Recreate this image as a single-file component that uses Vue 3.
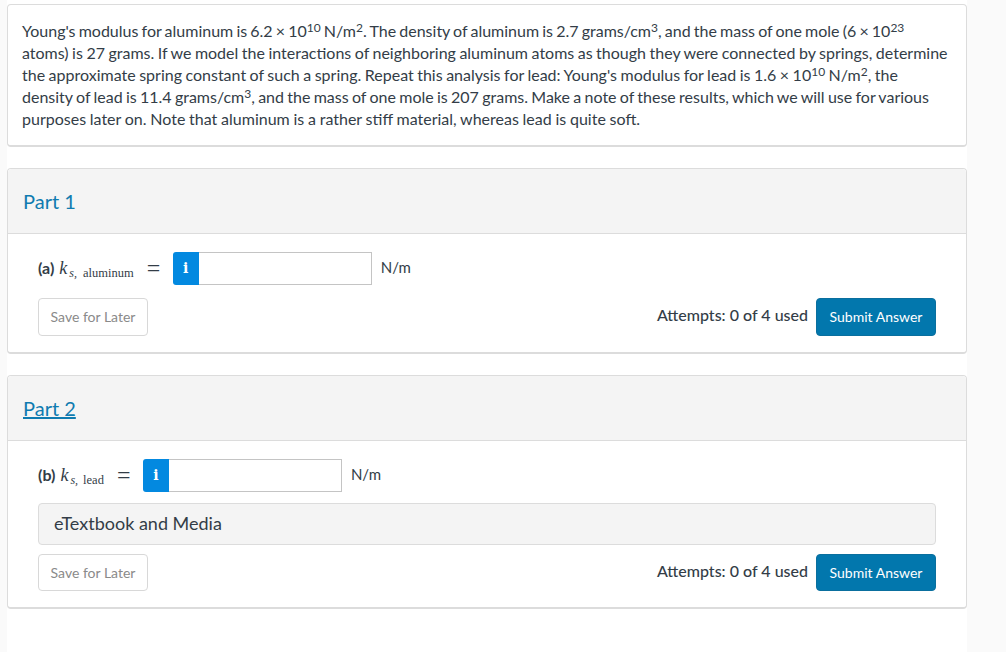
<template>
  <main class="page">
    <div class="column">
      <section class="card question">
        <p>
          <span class="line first">Young's modulus for aluminum is 6.2 × 10<sup>10</sup> N/m<sup>2</sup>. The density of aluminum is 2.7 grams/cm<sup>3</sup>, and the mass of one mole (6 × 10<sup>23</sup></span>
          <span class="line">atoms) is 27 grams. If we model the interactions of neighboring aluminum atoms as though they were connected by springs, determine</span>
          <span class="line">the approximate spring constant of such a spring. Repeat this analysis for lead: Young's modulus for lead is 1.6 × 10<sup>10</sup> N/m<sup>2</sup>, the</span>
          <span class="line fourth">density of lead is 11.4 grams/cm<sup>3</sup>, and the mass of one mole is 207 grams. Make a note of these results, which we will use for various</span>
          <span class="line last">purposes later on. Note that aluminum is a rather stiff material, whereas lead is quite soft.</span>
        </p>
      </section>

      <section v-for="part in parts" :key="part.title" class="card part">
        <header class="part-head">
          <a class="part-title" :class="{ active: part.active }">{{ part.title }}</a>
        </header>
        <div class="part-body" :class="{ tight: part.media }">
          <div class="answer-row">
            <strong class="letter">({{ part.letter }})</strong>
            <span class="formula">
              <i class="k">k</i><i class="s">s,</i><span class="sub">{{ part.sub }}</span>
            </span>
            <span class="eq">=</span>
            <span class="field">
              <span class="info">i</span>
              <input class="input" type="text" />
            </span>
            <span class="unit">N/m</span>
          </div>
          <div v-if="part.media" class="media">eTextbook and Media</div>
          <div class="actions">
            <button class="btn-save">Save for Later</button>
            <span class="attempts">Attempts: 0 of 4 used</span>
            <button class="btn-submit">Submit Answer</button>
          </div>
        </div>
      </section>
    </div>
  </main>
</template>

<script setup>
const parts = [
  { title: 'Part 1', letter: 'a', sub: 'aluminum', active: false, media: false },
  { title: 'Part 2', letter: 'b', sub: 'lead', active: true, media: true }
];
</script>

<style scoped>
.page {
  min-height: 652px;
  background: #fafafa;
  font-family: Lato, "Open Sans", sans-serif;
  color: #333d47;
  overflow: hidden;
}
.column {
  width: 960px;
  height: 652px;
  margin-left: 7px;
  padding-top: 4px;
  box-sizing: border-box;
  background: #fff;
  display: flex;
  flex-direction: column;
  gap: 21px;
}
.card {
  background: #fff;
  border: 1px solid #dcdcdc;
  border-bottom-width: 2px;
  border-radius: 4px;
  box-sizing: border-box;
}
.question { height: 143px; padding: 15px 14px; }
.question p {
  margin: 0;
  font-size: 16px;
  line-height: 22px;
  word-spacing: -0.6px;
  white-space: nowrap;
}
.line { display: block; }
.line.first { word-spacing: -0.95px; }
.line.fourth { word-spacing: -0.8px; }
.line.last { word-spacing: -0.35px; }
sup { font-size: 12px; line-height: 0; vertical-align: 5px; }
.part-head {
  height: 65px;
  background: #f4f4f4;
  border-bottom: 1px solid #dcdcdc;
  display: flex;
  align-items: center;
  padding-left: 15px;
  border-radius: 4px 4px 0 0;
  box-sizing: border-box;
}
.part-title { font-size: 20px; color: #0f7bb0; }
.part-title.active { text-decoration: underline; }
.part-body { padding: 17px 30px 16px; }
.answer-row { display: flex; align-items: center; height: 34px; font-size: 15px; }
.letter { font-weight: 700; margin: 0 5px 2px 0; font-size: 16px; }
.formula { font-family: "Liberation Serif", serif; display: flex; align-items: baseline; }
.k { font-size: 18px; }
.s { font-size: 12px; margin: 0 6px 0 2px; position: relative; top: 3px; }
.tight .s { margin-right: 5px; }
.sub { font-size: 12.5px; position: relative; top: 3px; }
.eq { margin: 0 14px 0 13px; width: 12px; font-size: 24px; line-height: 1; font-family: "Liberation Serif", serif; }
.field { display: flex; height: 33px; }
.info {
  width: 26px;
  background: #0389e0;
  color: #fff;
  font: 700 14px "DejaVu Serif", serif;
  display: flex;
  align-items: center;
  justify-content: center;
  border-radius: 3px 0 0 3px;
}
.input {
  width: 173px;
  height: 33px;
  box-sizing: border-box;
  border: 1px solid #c4c4c4;
  border-left: 0;
  outline: none;
  background: #fff;
  padding: 0;
}
.unit { margin: 0 0 2px 9px; font-size: 15px; }
.media {
  margin-top: 11px;
  height: 42px;
  line-height: 38px;
  padding-left: 15px;
  background: #f4f4f4;
  border: 1px solid #dcdcdc;
  border-radius: 4px;
  box-sizing: border-box;
  font-size: 18px;
}
.actions { display: flex; align-items: center; margin-top: 13px; }
.tight .actions { margin-top: 9px; }
.btn-save,
.btn-submit {
  height: 38px;
  border-radius: 4px;
  font: 14px Lato, sans-serif;
  padding: 0 0 2px;
}
.tight .btn-save,
.tight .btn-submit { height: 37px; padding: 0; }
.btn-save {
  width: 110px;
  border: 1px solid #d8d8d8;
  background: #fff;
  color: #8a8a8a;
}
.attempts {
  margin-left: auto;
  font-size: 16px;
  font-weight: 500;
  margin-right: 8px;
  position: relative;
  top: -3px;
}
.tight .attempts { top: -2px; }
.btn-submit {
  width: 120px;
  border: 1px solid #0a6f9e;
  background: #0277ad;
  color: #fff;
}
</style>

<style>
html, body { margin: 0; background: #fafafa; }
</style>
